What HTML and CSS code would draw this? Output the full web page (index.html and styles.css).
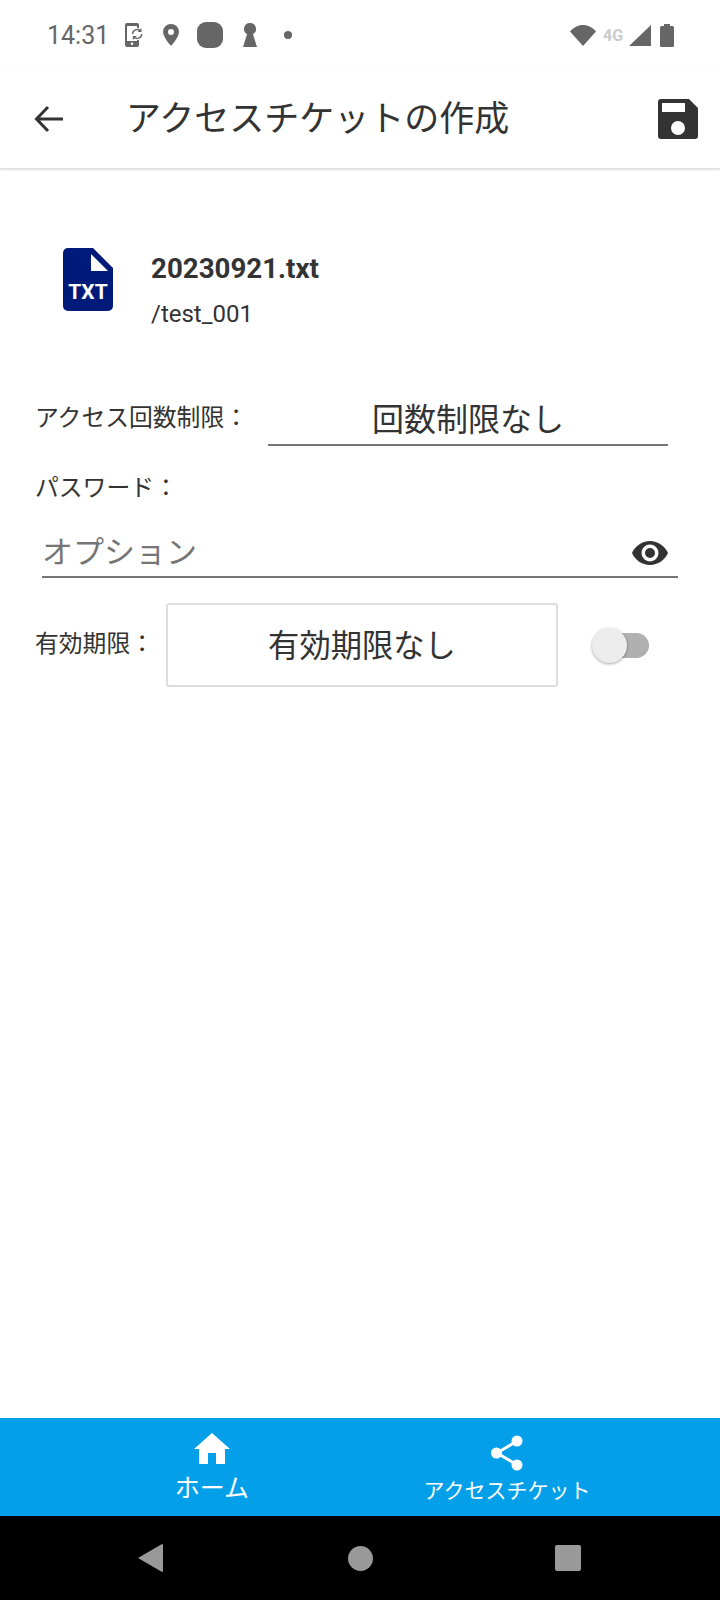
FILE: index.html
```html
<!DOCTYPE html>
<html lang="ja">
<head>
<meta charset="utf-8">
<title>アクセスチケットの作成</title>
<link rel="stylesheet" href="styles.css">
</head>
<body>
<div class="screen">
  <div class="status">
    <span class="time">14:31</span>
    <svg class="st-sync" viewBox="0 0 18 24"><path fill="#666" fill-rule="evenodd" d="M2 0h10a2 2 0 0 1 2 2v3h-2V3H2v15h10v-1h2v5a2 2 0 0 1-2 2H2a2 2 0 0 1-2-2V2a2 2 0 0 1 2-2zm5 19.500a1.300 1.300 0 1 0 0 2.600 1.300 1.300 0 0 0 0-2.600z"/><path fill="none" stroke="#666" stroke-width="1.500" d="M7.500 11a4.800 4.800 0 0 1 8-3.300M16.800 11a4.800 4.800 0 0 1-8 3.300"/><path fill="#666" d="M16.500 5v4h-4zM7.800 17v-4h4z"/></svg>
    <svg class="st-pin" viewBox="0 0 16 22"><path fill="#666" fill-rule="evenodd" d="M8 0a8 8 0 0 1 8 8c0 5-8 14-8 14S0 13 0 8a8 8 0 0 1 8-8zm0 5a3 3 0 1 0 0 6 3 3 0 0 0 0-6z"/></svg>
    <span class="st-square"></span>
    <svg class="st-key" viewBox="0 0 14 24"><path fill="#666" d="M7 0a6 6 0 0 1 3 11.200L14 24H0l4-12.800A6 6 0 0 1 7 0z"/></svg>
    <span class="st-dot"></span>
    <span class="st-spacer"></span>
    <svg class="st-wifi" viewBox="0 0 26 21"><path fill="#666" d="M13 21 0 6.500C3.500 2.500 8 0 13 0s9.500 2.500 13 6.500z"/></svg>
    <span class="st-4g">4G</span>
    <svg class="st-signal" viewBox="0 0 22 21"><path fill="#666" d="M22 0v21H0z"/></svg>
    <svg class="st-batt" viewBox="0 0 14 23"><path fill="#666" d="M4 0h6v2h2.500A1.500 1.500 0 0 1 14 3.500v18a1.500 1.500 0 0 1-1.500 1.500h-11A1.500 1.500 0 0 1 0 21.500v-18A1.500 1.500 0 0 1 1.500 2H4z"/></svg>
  </div>

  <header class="appbar">
    <svg class="back" viewBox="0 0 30 28"><path fill="none" stroke="#333" stroke-width="3" d="M29 14H3M14 2 2.500 14 14 26"/></svg>
    <h1 class="title">アクセスチケットの作成</h1>
    <svg class="save" viewBox="0 0 40 40"><path fill="#333" fill-rule="evenodd" d="M3 0h28l9 9v28a3 3 0 0 1-3 3H3a3 3 0 0 1-3-3V3a3 3 0 0 1 3-3zm1 4v9h23V4zm16 18a7 7 0 1 0 0 14 7 7 0 0 0 0-14z"/></svg>
  </header>

  <main class="content">
    <section class="file">
      <div class="file-icon">
        <svg class="file-shape" viewBox="0 0 50 63"><path fill="#001a7a" d="M5 0h25l20 20v38a5 5 0 0 1-5 5H5a5 5 0 0 1-5-5V5a5 5 0 0 1 5-5z"/><path fill="#fff" d="M28 6 45 23H28z"/></svg>
        <span class="file-ext">TXT</span>
      </div>
      <div class="file-text">
        <div class="file-name">20230921.txt</div>
        <div class="file-path">/test_001</div>
      </div>
    </section>

    <div class="row-limit">
      <span class="label">アクセス回数制限：</span>
      <div class="limit-value">回数制限なし</div>
    </div>

    <div class="label pw-label">パスワード：</div>
    <div class="pw-field">
      <span class="placeholder">オプション</span>
      <svg class="eye" viewBox="0 0 36 24"><path fill="#333" fill-rule="evenodd" d="M18 0c8 0 15 5 18 12-3 7-10 12-18 12S3 19 0 12C3 5 10 0 18 0zm0 3.500a8.500 8.500 0 1 0 0 17 8.500 8.500 0 0 0 0-17zM18 7a5 5 0 1 1 0 10 5 5 0 0 1 0-10z"/></svg>
    </div>

    <div class="row-expire">
      <span class="label">有効期限：</span>
      <div class="expire-box">有効期限なし</div>
      <div class="switch"><span class="thumb"></span></div>
    </div>
  </main>

  <nav class="tabs">
    <div class="tab">
      <svg class="tab-home" viewBox="0 0 36 31"><path fill="#fff" d="M18 0 36 16h-5v15H22V20h-8v11H5V16H0z"/></svg>
      <span class="tab-label-home">ホーム</span>
    </div>
    <div class="tab tab-second">
      <svg class="tab-share" viewBox="0 0 32 36"><path fill="none" stroke="#fff" stroke-width="3" d="M26 6 6 18l20 12"/><circle cx="26" cy="6" r="5.500" fill="#fff"/><circle cx="5.500" cy="18" r="5.500" fill="#fff"/><circle cx="26" cy="30" r="5.500" fill="#fff"/></svg>
      <span class="tab-label-share">アクセスチケット</span>
    </div>
  </nav>

  <div class="sysnav">
    <svg class="sys-back" viewBox="0 0 25 28"><path fill="#999" d="M24 0a1 1 0 0 1 1 1v26a1 1 0 0 1-1 1L0 14z"/></svg>
    <span class="sys-home"></span>
    <span class="sys-recent"></span>
  </div>
</div>
</body>
</html>
```

FILE: styles.css
```css
* { box-sizing: border-box; }
html, body { margin: 0; padding: 0; background: #fff; }
body { font-family: Roboto, "Noto Sans CJK JP", sans-serif; color: #333; }
.screen { width: 720px; height: 1600px; display: flex; flex-direction: column; overflow: hidden; }

.status { height: 70px; display: flex; align-items: center; padding: 0 46px 0 47px; flex: none; }
.time { font-size: 25px; color: #666; width: 60px; }
.st-sync { width: 18px; height: 24px; margin-left: 18px; }
.st-pin { width: 16px; height: 22px; margin-left: 20px; }
.st-square { width: 26px; height: 26px; border-radius: 9px; background: #666; margin-left: 18px; }
.st-key { width: 14px; height: 24px; margin-left: 20px; }
.st-dot { width: 8px; height: 8px; border-radius: 50%; background: #666; margin-left: 27px; }
.st-spacer { flex: 1; }
.st-wifi { width: 26px; height: 21px; }
.st-4g { font-size: 16px; font-weight: 700; color: #ccc; margin-left: 7px; width: 21px; }
.st-signal { width: 22px; height: 21px; margin-left: 5px; }
.st-batt { width: 14px; height: 23px; margin-left: 9px; margin-right: 0; }

.appbar { height: 99px; flex: none; display: flex; align-items: center; padding: 0 22px 0 34px; background: #fff; border-bottom: 1px solid #e0e0e0; box-shadow: 0 1px 2px rgba(0,0,0,.12); position: relative; }
.back { width: 30px; height: 28px; flex: none; }
.title { margin: 2px 0 0 62px; font-size: 35px; font-weight: 400; color: #333; flex: 1; line-height: 1.2; }
.save { width: 40px; height: 40px; flex: none; }

.content { flex: 1; padding: 79px 0 0 35px; }
.file { display: flex; align-items: flex-start; padding-left: 28px; }
.file-icon { position: relative; width: 50px; height: 63px; flex: none; }
.file-shape { width: 50px; height: 63px; display: block; }
.file-ext { position: absolute; left: 0; right: 0; top: 32px; text-align: center; color: #fff; font-size: 21px; line-height: 24px; font-weight: 700; }
.file-text { margin-left: 38px; }
.file-name { font-size: 27.700px; font-weight: 700; line-height: 40px; margin-top: 1px; color: #333; }
.file-path { font-size: 24px; line-height: 32px; margin-top: 9px; color: #333; }

.label { font-size: 23.800px; color: #333; line-height: 34px; }
.row-limit { display: flex; align-items: flex-start; margin-top: 66px; }
.row-limit .label { width: 233px; flex: none; margin-top: 5px; }
.limit-value { width: 400px; height: 50px; border-bottom: 2px solid #757575; text-align: center; font-size: 32px; line-height: 48px; color: #333; }
.pw-label { margin-top: 25px; }
.pw-field { margin: 20px 0 0 7px; width: 636px; height: 53px; display: flex; align-items: center; justify-content: space-between; border-bottom: 2px solid #757575; padding: 4px 10px 0 0; }
.placeholder { font-size: 31px; color: #757575; line-height: 46px; }
.eye { width: 36px; height: 24px; }

.row-expire { display: flex; align-items: center; margin-top: 25px; }
.row-expire .label { width: 131px; flex: none; margin-bottom: 2px; }
.expire-box { width: 392px; height: 84px; border: 2px solid #ddd; border-radius: 3px; display: flex; align-items: center; justify-content: center; font-size: 31.300px; color: #333; padding-bottom: 4px; }
.switch { position: relative; width: 50px; height: 25px; border-radius: 13px; background: #b0b0b0; margin-left: 41px; }
.thumb { position: absolute; left: -7px; top: -5px; width: 35px; height: 35px; border-radius: 50%; background: #ececec; box-shadow: 0 1px 3px rgba(0,0,0,.35); }

.tabs { height: 98px; flex: none; background: #039fe8; display: flex; padding-left: 112px; }
.tab { width: 200px; display: flex; flex-direction: column; align-items: center; color: #fff; }
.tab-second { margin-left: 95px; }
.tab-home { width: 36px; height: 31px; margin-top: 15px; }
.tab-label-home { font-size: 25px; line-height: 34px; margin-top: 8px; }
.tab-share { width: 32px; height: 36px; margin-top: 17px; }
.tab-label-share { font-size: 21px; line-height: 30px; margin-top: 5px; white-space: nowrap; }

.sysnav { height: 84px; flex: none; background: #000; display: flex; align-items: center; padding-left: 138px; }
.sys-back { width: 25px; height: 28px; }
.sys-home { width: 25px; height: 25px; border-radius: 50%; background: #999; margin-left: 185px; }
.sys-recent { width: 26px; height: 26px; border-radius: 2px; background: #999; margin-left: 182px; }
```
